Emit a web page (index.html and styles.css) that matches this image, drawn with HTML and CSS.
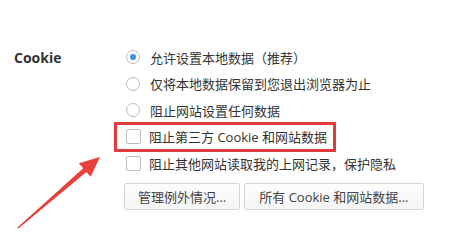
FILE: index.html
```html
<!DOCTYPE html>
<html lang="zh-CN">
<head>
  <meta charset="UTF-8">
  <meta name="viewport" content="width=device-width, initial-scale=1.0">
  <title>Cookie 设置</title>
  <link rel="stylesheet" href="styles.css">
</head>
<body>
  <div class="page">
    <div class="section">
      <div class="label">Cookie</div>
      <div class="options">
        <div class="row">
          <span class="radio checked"></span>
          <span class="text">允许设置本地数据（推荐）</span>
        </div>
        <div class="row">
          <span class="radio"></span>
          <span class="text">仅将本地数据保留到您退出浏览器为止</span>
        </div>
        <div class="row">
          <span class="radio"></span>
          <span class="text">阻止网站设置任何数据</span>
        </div>
        <div class="row highlight">
          <span class="checkbox"></span>
          <span class="text">阻止第三方 Cookie 和网站数据</span>
        </div>
        <div class="row">
          <span class="checkbox"></span>
          <span class="text">阻止其他网站读取我的上网记录，保护隐私</span>
        </div>
        <div class="buttons">
          <button class="btn">管理例外情况...</button>
          <button class="btn wide">所有 Cookie 和网站数据...</button>
        </div>
      </div>
    </div>

    <!-- annotation arrow -->
    <svg class="arrow" width="110" height="96" viewBox="0 140 110 96">
      <polygon fill="#e8403a" points="17.4,227.4 83.2,168.2 78.8,163.2 100,157 90.6,176.8 86.4,172 18.4,228.6"/>
    </svg>
  </div>
</body>
</html>
```

FILE: styles.css
```css
* {
  margin: 0;
  padding: 0;
  box-sizing: border-box;
}

body {
  background: #fff;
  font-family: "Open Sans", "Noto Sans CJK SC", sans-serif;
  font-size: 13px;
  color: #333;
}

.page {
  position: relative;
  width: 467px;
  height: 236px;
  overflow: hidden;
}

.section {
  display: flex;
  padding-top: 44px;
}

.label {
  width: 126px;
  padding-left: 14px;
  height: 27px;
  line-height: 27px;
  font-size: 14px;
  font-weight: 700;
  color: #333;
}

.options {
  display: flex;
  flex-direction: column;
}

.row {
  display: flex;
  align-items: center;
  height: 26.5px;
}

.radio {
  width: 14px;
  height: 14px;
  border: 1px solid #bdbdbd;
  border-radius: 50%;
  margin-right: 10px;
  display: flex;
  justify-content: center;
  align-items: center;
  background: #fff;
}

.radio.checked::after {
  content: "";
  width: 6px;
  height: 6px;
  border-radius: 50%;
  background: #3d8fe6;
}

.checkbox {
  width: 15px;
  height: 15px;
  border: 1px solid #bdbdbd;
  border-radius: 2px;
  margin-right: 8px;
  background: #fff;
}

.highlight {
  height: 30px;
  margin: -2px 0 -1.5px -12px;
  padding-left: 9px;
  padding-right: 6px;
  border: 3px solid #e23b3b;
  align-self: flex-start;
}

.buttons {
  display: flex;
  gap: 4px;
  margin-top: 6px;
  margin-left: -2px;
}

.btn {
  height: 27px;
  padding: 0 13px;
  font: inherit;
  color: #444;
  background: linear-gradient(#fdfdfd, #f5f5f5);
  border: 1px solid #d6d6d6;
  border-radius: 2px;
}

.btn.wide {
  padding: 0 14px;
}

.arrow {
  position: absolute;
  left: 0;
  top: 140px;
}
```
